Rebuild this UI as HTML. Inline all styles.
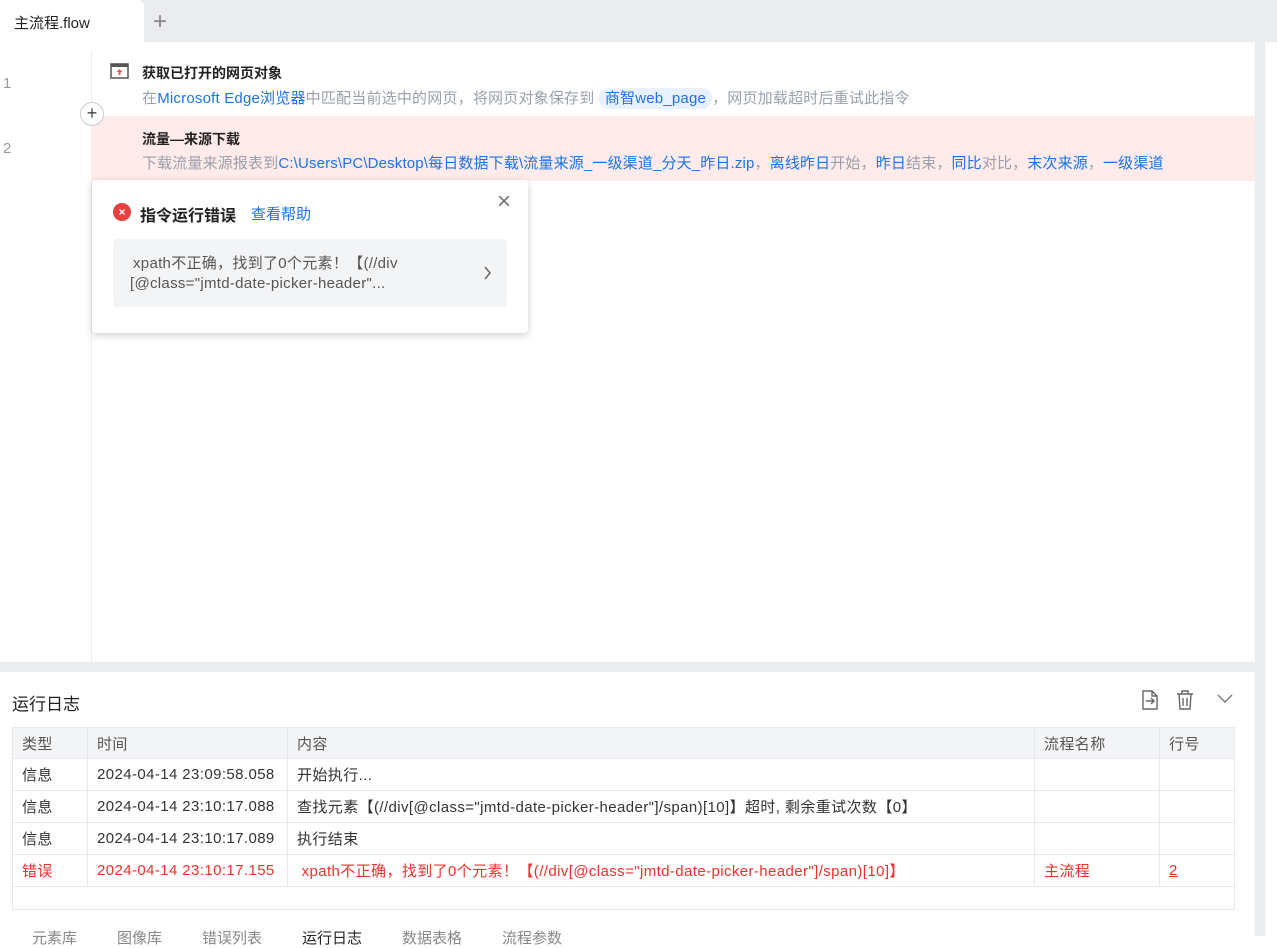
<!DOCTYPE html><html><head><meta charset="utf-8"><style>
*{margin:0;padding:0;box-sizing:border-box}
body{width:1277px;height:936px;overflow:hidden;background:#fff;font-family:"Liberation Sans","Noto Sans CJK SC",sans-serif;position:relative;color:#333}
.a{position:absolute;white-space:nowrap}
.b{color:#1a73e8}.g{color:#9aa0ab}
table{border-collapse:collapse;position:absolute;left:12px;top:727px;width:1223px;font-size:15px;letter-spacing:.4px}
td{border:1px solid #e6e8ec;height:32px;padding:0 9px;color:#333;vertical-align:middle}
tr.h td{background:#f3f4f6;height:31px;color:#555}
tr.e td{color:#f0302c}
</style></head><body>
<div class="a" style="left:0;top:0;width:1277px;height:42px;background:#ebecf0"></div>
<div class="a" style="left:0;top:0;width:144px;height:42px;background:#fff;border-radius:0 6px 0 0"></div>
<div class="a" style="left:14px;top:12px;font-size:15px;color:#222">主流程.flow</div>
<div class="a" style="left:153px;top:8px;font-size:24px;color:#888;font-weight:300">+</div>
<div class="a" style="left:1255px;top:42px;width:10px;height:894px;background:#ebecf0"></div>
<div class="a" style="left:0;top:662px;width:1265px;height:10px;background:#ebecf0"></div>
<div class="a" style="left:1245px;top:672px;width:10px;height:10px;background:#fff;border-radius:0 8px 0 0"></div>
<div class="a" style="left:91px;top:50px;width:1px;height:612px;background:#eceef2"></div>
<div class="a g" style="left:3px;top:75px;font-size:15px;color:#999">1</div>
<div class="a g" style="left:3px;top:140px;font-size:15px;color:#999">2</div>
<div class="a" style="left:91px;top:116px;width:1164px;height:65px;background:#ffebe9"></div>
<svg class="a" style="left:110px;top:63px" width="20" height="17"><rect x="1" y="1" width="17" height="14" fill="#fff" stroke="#555" stroke-width="1.5"/><rect x="1" y="1" width="17" height="3" fill="#555"/><path d="M9.5 6l3 3h-2v3h-2v-3h-2z" fill="#e54"/></svg>
<div class="a" style="left:142px;top:63px;font-size:14px;font-weight:bold;color:#222">获取已打开的网页对象</div>
<div class="a g" style="left:142px;top:87px;font-size:15px;letter-spacing:.2px">在<span class="b">Microsoft Edge浏览器</span>中匹配当前选中的网页，将网页对象保存到 <span class="b" style="background:#e8f1fd;border-radius:10px;padding:2px 6px">商智web_page</span>，网页加载超时后重试此指令</div>
<div class="a" style="left:80px;top:102px;width:24px;height:24px;border:1px solid #ccc;border-radius:50%;background:#fff;text-align:center;line-height:21px;font-size:18px;color:#444">+</div>
<div class="a" style="left:142px;top:129px;font-size:14px;font-weight:bold;color:#222">流量—来源下载</div>
<div class="a g" style="left:142px;top:152px;font-size:15px;letter-spacing:.15px">下载流量来源报表到<span class="b">C:\Users\PC\Desktop\每日数据下载\流量来源_一级渠道_分天_昨日.zip</span>，<span class="b">离线昨日</span>开始，<span class="b">昨日</span>结束，<span class="b">同比</span>对比，<span class="b">末次来源</span>，<span class="b">一级渠道</span></div>
<div class="a" style="left:92px;top:180px;width:436px;height:153px;background:#fff;border-radius:4px;box-shadow:0 2px 8px rgba(0,0,0,.2)"></div>
<div class="a" style="left:113px;top:203px;width:18px;height:18px;border-radius:50%;background:#e84040;color:#fff;font-size:12px;font-weight:bold;text-align:center;line-height:18px">×</div>
<div class="a" style="left:140px;top:202px;font-size:16px;font-weight:bold;color:#222">指令运行错误</div>
<div class="a b" style="left:251px;top:203px;font-size:15px">查看帮助</div>
<div class="a" style="left:497px;top:188px;font-size:24px;color:#777;font-weight:300">×</div>
<div class="a" style="left:113px;top:239px;width:394px;height:68px;background:#f3f4f6;border-radius:4px"></div>
<div class="a" style="left:133px;top:254px;font-size:15px;color:#555;line-height:20px;letter-spacing:.3px">xpath不正确，找到了0个元素！【(//div<br><span style="margin-left:-3px">[@class="jmtd-date-picker-header"...</span></div>
<svg class="a" style="left:484px;top:266px" width="8" height="14" fill="none" stroke="#666" stroke-width="1.5"><path d="M1 1l5 6-5 6"/></svg>
<div class="a" style="left:12px;top:690px;font-size:17px;color:#222">运行日志</div>
<svg class="a" style="left:1141px;top:690px" width="18" height="20" fill="none" stroke="#666" stroke-width="1.4"><path d="M2 1h9l5 5v13H2z M11 1v5h5 M5 11h8 M10 8l3 3-3 3"/></svg>
<svg class="a" style="left:1176px;top:690px" width="18" height="20" fill="none" stroke="#666" stroke-width="1.4"><path d="M1 4h16 M6 4V1h6v3 M3 4l1 15h10l1-15 M7 8v8 M11 8v8"/></svg>
<svg class="a" style="left:1217px;top:694px" width="16" height="10" fill="none" stroke="#777" stroke-width="1.4"><path d="M1 1l7 7 7-7"/></svg>
<table>
<tr class="h"><td style="width:75px">类型</td><td style="width:200px">时间</td><td>内容</td><td style="width:125px">流程名称</td><td style="width:75px">行号</td></tr>
<tr><td>信息</td><td>2024-04-14 23:09:58.058</td><td>开始执行...</td><td></td><td></td></tr>
<tr><td>信息</td><td>2024-04-14 23:10:17.088</td><td>查找元素【(//div[@class="jmtd-date-picker-header"]/span)[10]】超时, 剩余重试次数【0】</td><td></td><td></td></tr>
<tr><td>信息</td><td>2024-04-14 23:10:17.089</td><td>执行结束</td><td></td><td></td></tr>
<tr class="e"><td>错误</td><td>2024-04-14 23:10:17.155</td><td>&nbsp;xpath不正确，找到了0个元素！【(//div[@class="jmtd-date-picker-header"]/span)[10]】</td><td>主流程</td><td><u>2</u></td></tr>
<tr><td colspan="5" style="height:23px;border-top:1px solid #e6e8ec"></td></tr>
</table>
<div class="a" style="top:927px;left:32px;font-size:15px;color:#888">元素库</div>
<div class="a" style="top:927px;left:117px;font-size:15px;color:#888">图像库</div>
<div class="a" style="top:927px;left:202px;font-size:15px;color:#888">错误列表</div>
<div class="a" style="top:927px;left:302px;font-size:15px;color:#222">运行日志</div>
<div class="a" style="top:927px;left:402px;font-size:15px;color:#888">数据表格</div>
<div class="a" style="top:927px;left:502px;font-size:15px;color:#888">流程参数</div>
</body></html>
